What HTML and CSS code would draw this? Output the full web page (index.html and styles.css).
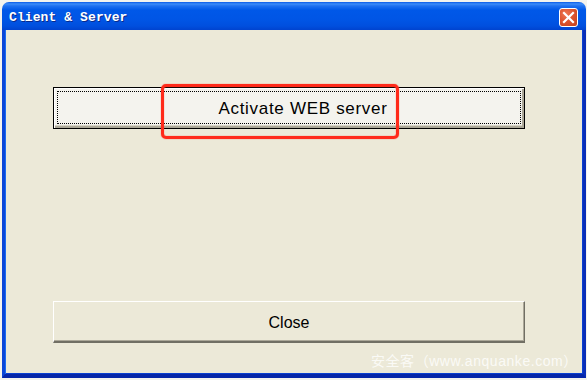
FILE: index.html
```html
<!DOCTYPE html>
<html>
<head>
<meta charset="utf-8">
<link rel="stylesheet" href="styles.css">
</head>
<body>
<div class="window">
  <div class="titlebar">
    <span class="title">Client &amp; Server</span>
    <span class="xbtn">
      <svg width="13" height="13" viewBox="0 0 13 13"><path d="M2 2 L11 11 M11 2 L2 11" stroke="#fff" stroke-width="2.2" stroke-linecap="square"/></svg>
    </span>
  </div>
  <div class="client">
    <div class="btn default"><span class="focus">Activate WEB server</span></div>
    <div class="spacer"></div>
    <div class="btn">Close</div>
    <div class="mark"></div>
  </div>
  <div class="watermark">安全客（www.anquanke.com）</div>
</div>
</body>
</html>
```
FILE: styles.css
```css
html, body {
  margin: 0;
  padding: 0;
  background: #f4f3ee;
  width: 587px;
  height: 380px;
  overflow: hidden;
}
.window {
  position: relative;
  margin: 2px 1px 0 2px;
  width: 584px;
  height: 376px;
  display: flex;
  flex-direction: column;
}
.titlebar {
  height: 28px;
  border-radius: 7px 7px 0 0;
  background: linear-gradient(to bottom, #0a5ae8 0px, #3d8cf8 2px, #1f70f0 4px, #0058e8 8px, #0055e5 18px, #004fde 24px, #0043cf 28px);
  display: flex;
  align-items: center;
  padding-left: 7px;
  padding-right: 7px;
  box-sizing: border-box;
}
.title {
  flex: 1;
  font-family: "Liberation Mono", "DejaVu Sans Mono", monospace;
  font-weight: bold;
  font-size: 13px;
  letter-spacing: 0.1px;
  color: #fff;
  text-shadow: 1px 1px 0 #0a2a8a;
  margin-top: 2px;
}
.xbtn {
  width: 19px;
  height: 19px;
  box-sizing: border-box;
  border: 1px solid #fff;
  border-radius: 3px;
  background: radial-gradient(circle at 35% 30%, #ef7a55 0%, #dd5530 45%, #c2401a 100%);
  display: flex;
  align-items: center;
  justify-content: center;
  margin-top: 3px;
  margin-right: 1px;
}
.client {
  flex: 1;
  background: #ece9d8;
  border-left: 3px solid #0b46d8;
  border-right: 3px solid #0a2fb8;
  border-bottom: 4px solid #0626a8;
  box-shadow: inset 1px 0 0 #1b6cf2, inset -1px 0 0 #0a40d0, inset 0 -1px 0 #0a40d0;
  padding: 57px 58px 0 48px;
  display: flex;
  flex-direction: column;
}
.btn {
  height: 42px;
  box-sizing: border-box;
  border-top: 1px solid #fff;
  border-left: 1px solid #fff;
  border-bottom: 2px solid #716f64;
  border-right: 1px solid #716f64;
  box-shadow: inset 0 -1px 0 #aca899, inset -1px 0 0 #aca899;
  display: flex;
  align-items: center;
  justify-content: center;
  font-family: "Liberation Sans", Arial, sans-serif;
  font-size: 16px;
  color: #000;
  padding-top: 2px;
}
.btn.default {
  border: 1px solid #000;
  background: #f4f3ee;
  box-shadow: inset 1px 1px 0 #fff, inset 0 -2px 0 #aca899, inset -2px 0 0 #aca899, inset 0 -3px 0 #d6d3c6;
  padding: 3px 3px 4px 3px;
}
.focus {
  flex: 1;
  align-self: stretch;
  border: 1px dotted #000;
  display: flex;
  align-items: center;
  justify-content: center;
  font-size: 17px;
  letter-spacing: 0.7px;
  padding-top: 3px;
  padding-left: 28px;
}
.spacer {
  height: 172px;
}
.mark {
  position: absolute;
  left: 159px;
  top: 82px;
  width: 238px;
  height: 55px;
  box-sizing: border-box;
  border: 3px solid #ff2a1a;
  border-radius: 5px;
  box-shadow: 0 0 1px #ff2a1a, inset 0 0 1px #ff2a1a;
}
.watermark {
  position: absolute;
  left: 369px;
  top: 348px;
  font-family: "Liberation Sans", "Noto Sans CJK SC", sans-serif;
  font-size: 14px;
  letter-spacing: 0.55px;
  color: rgba(255, 255, 255, 0.8);
  white-space: nowrap;
}
```
